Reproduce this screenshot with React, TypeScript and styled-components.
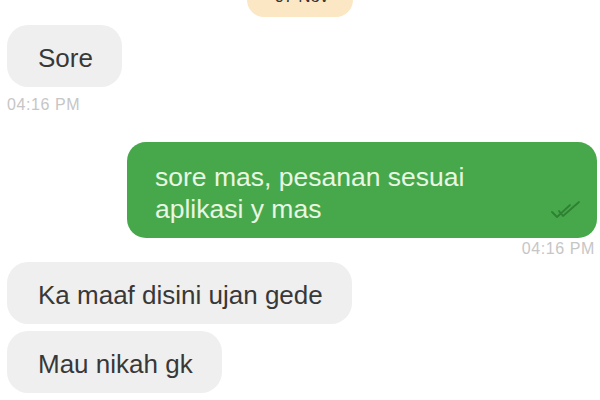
import React from "react";
import styled, { createGlobalStyle } from "styled-components";

const Global = createGlobalStyle`
  html, body { margin: 0; padding: 0; background: #ffffff; }
  body { font-family: "Liberation Sans", Arial, sans-serif; overflow: hidden; }
`;

const Page = styled.div`
  width: 600px;
  height: 400px;
  box-sizing: border-box;
  padding: 0 3px 0 7px;
  display: flex;
  flex-direction: column;
  overflow: hidden;
`;

const DateRow = styled.div`
  display: flex;
  justify-content: center;
  margin-top: -18px;
  padding-right: 4px;
`;

const DatePill = styled.div`
  background: #fbe7c3;
  color: #333333;
  font-size: 17px;
  line-height: 20px;
  padding: 5px 25px 10px 28px;
  border-radius: 17px;
`;

const Bubble = styled.div<{ $mt?: number }>`
  align-self: flex-start;
  background: #efefef;
  color: #383838;
  font-size: 26px;
  line-height: 30px;
  padding: 18px 29px 14px 31px;
  border-radius: 21px;
  margin-top: ${(p) => p.$mt ?? 0}px;
  white-space: nowrap;
`;

const OutBubble = styled.div`
  align-self: flex-end;
  position: relative;
  box-sizing: border-box;
  width: 470px;
  margin-top: 28px;
  background: #46a84a;
  color: #e8f6e2;
  font-size: 26.5px;
  line-height: 32px;
  padding: 19px 60px 13px 28px;
  border-radius: 19px;
`;

const Ticks = styled.svg`
  position: absolute;
  right: 15px;
  bottom: 17px;
  width: 31px;
  height: 20px;
`;

const Time = styled.div<{ $right?: boolean; $mt: number }>`
  align-self: ${(p) => (p.$right ? "flex-end" : "flex-start")};
  color: #c6c6c6;
  font-size: 16px;
  line-height: 18px;
  letter-spacing: 0.6px;
  margin-top: ${(p) => p.$mt}px;
  margin-right: ${(p) => (p.$right ? 2 : 0)}px;
`;

export default function App() {
  return (
    <>
      <Global />
      <Page>
        <DateRow>
          <DatePill>07 Nov</DatePill>
        </DateRow>
        <Bubble $mt={8}>Sore</Bubble>
        <Time $mt={9}>04:16 PM</Time>
        <OutBubble>
          sore mas, pesanan sesuai aplikasi y mas
          <Ticks viewBox="0 0 31 20" fill="none">
            <path
              d="M1 11 L6 16 L19 4"
              stroke="#2f8033"
              strokeWidth="1.8"
              strokeLinecap="round"
              strokeLinejoin="round"
            />
            <path
              d="M8 10 L12 15 L28 1"
              stroke="#2f8033"
              strokeWidth="1.8"
              strokeLinecap="round"
              strokeLinejoin="round"
            />
          </Ticks>
        </OutBubble>
        <Time $right $mt={2}>04:16 PM</Time>
        <Bubble $mt={4}>Ka maaf disini ujan gede</Bubble>
        <Bubble $mt={7}>Mau nikah gk</Bubble>
      </Page>
    </>
  );
}
